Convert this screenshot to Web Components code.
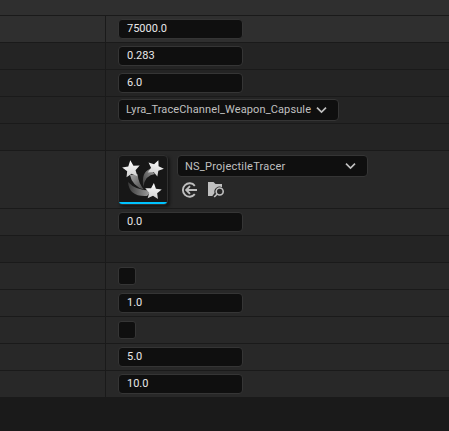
<!DOCTYPE html>
<html lang="en">
<head>
<meta charset="utf-8">
<title>Details</title>
<style>
html,body{margin:0;height:100%;background:#1a1a1a;overflow:hidden}
body{font-family:Roboto,"Liberation Sans",sans-serif;font-size:11px}
</style>
</head>
<body>
<details-panel>
  <property-row header></property-row>
  <property-row tone="hover"><number-field>75000.0</number-field></property-row>
  <property-row><number-field>0.283</number-field></property-row>
  <property-row><number-field>6.0</number-field></property-row>
  <property-row><combo-box style="width:221px;letter-spacing:.115px">Lyra_TraceChannel_Weapon_Capsule</combo-box></property-row>
  <property-row></property-row>
  <property-row tone="light" tall><asset-picker>NS_ProjectileTracer</asset-picker></property-row>
  <property-row tone="light"><number-field>0.0</number-field></property-row>
  <property-row></property-row>
  <property-row tone="light"><check-box></check-box></property-row>
  <property-row tone="light"><number-field>1.0</number-field></property-row>
  <property-row tone="light"><check-box></check-box></property-row>
  <property-row tone="light"><number-field>5.0</number-field></property-row>
  <property-row tone="light" last><number-field>10.0</number-field></property-row>
</details-panel>
<script>
const define = (name, html) => customElements.define(name, class extends HTMLElement {
  constructor() {
    super();
    this.attachShadow({ mode: 'open' }).innerHTML = html;
  }
});

define('details-panel', `<style>:host{display:flex;flex-direction:column;width:100%}</style><slot></slot>`);

define('property-row', `<style>
:host{display:grid;grid-template-columns:105px 1fr;box-sizing:border-box;height:27px;background:#242424;border-bottom:1px solid #1a1a1a}
:host([header]){display:block;height:16px;background:#2f2f2f}
:host([header]) *{display:none}
:host([tone=hover]){background:#2f2f2f}
:host([tone=light]){background:#282828}
:host([tall]){height:58px}
:host([last]){height:26px;border-bottom:0}
.value{display:flex;align-items:center;border-left:1px solid #1a1a1a;padding-left:12px}
</style><div class="name"></div><div class="value"><slot></slot></div>`);

define('number-field', `<style>
:host{display:flex;align-items:center;box-sizing:border-box;width:125px;height:20px;padding:0 8px 1px;border:1px solid #353535;border-radius:4px;background:#0f0f0f;color:#e8e8e8;line-height:13px}
</style><slot></slot>`);

define('check-box', `<style>
:host{display:block;box-sizing:border-box;width:18px;height:18px;border:1px solid #353535;border-radius:3px;background:#0f0f0f}
</style>`);

define('combo-box', `<style>
:host{display:flex;align-items:center;justify-content:space-between;box-sizing:border-box;height:22px;padding:0 11px 0 7px;border:1px solid #353535;border-radius:4px;background:#0f0f0f;color:#c0c0c0;line-height:13px;white-space:nowrap}
svg{display:block}
span{padding-bottom:var(--label-lift,1px);padding-top:var(--label-drop,0px)}
</style><span><slot></slot></span><svg width="11" height="8" viewBox="0 0 11 8"><path d="M1 1.7 5.5 6 10 1.7" fill="none" stroke="#c0c0c0" stroke-width="1.7"/></svg>`);

define('asset-thumb', `<style>
:host{display:block;box-sizing:border-box;width:50px;height:50px;border:1px solid #303030;border-radius:4px;background:#171717;box-shadow:2px 2px 3px #151515;overflow:hidden}
svg{display:block}
</style><svg width="48" height="48" viewBox="0 0 48 48">
<defs>
<linearGradient id="a" x1="0" y1="0" x2="1" y2="1"><stop offset="0" stop-color="#a8a8a8"/><stop offset="1" stop-color="#404040"/></linearGradient>
<linearGradient id="b" x1="0" y1="0" x2="1" y2="0"><stop offset="0" stop-color="#3a3a3a"/><stop offset="1" stop-color="#a8a8a8"/></linearGradient>
<linearGradient id="c" x1="1" y1="0" x2="0" y2="1"><stop offset="0" stop-color="#a0a0a0"/><stop offset="1" stop-color="#363636"/></linearGradient>
<linearGradient id="s" x1="0" y1="0" x2="0" y2="1"><stop offset="0" stop-color="#fff"/><stop offset="1" stop-color="#d0d0d0"/></linearGradient>
<path id="star" d="M0-9 2.6-3.2 8.8-2.8 4.2 1.5 5.5 7.5 0 4.5-5.5 7.5-4.2 1.5-8.8-2.8-2.6-3.2Z"/>
</defs>
<path d="M9 26Q10 41 28 40L33 34.5Q17 35 9 26Z" fill="url(#b)"/>
<path d="M11 19Q13 30 25.5 34Q19.5 28 18.5 18Z" fill="url(#a)"/>
<path d="M24.3 31Q22 16 31 13L36 18Q26 19 24.3 31Z" fill="url(#c)"/>
<use href="#star" transform="translate(12.2 13.3) rotate(-6)" fill="url(#s)"/>
<use href="#star" transform="translate(36.2 12) rotate(22) scale(.94)" fill="url(#s)"/>
<use href="#star" transform="translate(34.3 35.5) rotate(4) scale(.94)" fill="url(#s)"/>
<path d="M0 46h48v2H0z" fill="#00c3ff"/>
</svg>`);

define('asset-picker', `<style>
:host{display:grid;grid-template-columns:50px 190px;column-gap:9px;align-items:start}
asset-thumb{margin-top:1px}
.side{display:flex;flex-direction:column;gap:4px;padding-top:1px}
combo-box{letter-spacing:.23px;width:191px;--label-lift:0px;--label-drop:1px}
.tools{display:flex;gap:9px;padding-left:4px}
svg{display:block}
</style><asset-thumb></asset-thumb>
<div class="side"><combo-box><slot></slot></combo-box>
<div class="tools">
<svg width="17" height="18" viewBox="0 0 17 18"><g fill="none" stroke="#c0c0c0" stroke-width="1.9"><path d="M13.8 4.8A6.7 6.7 0 1 0 13.8 13.2M16 9H5.2M9 5.2 5.2 9 9 12.8"/></g></svg>
<svg width="18" height="18" viewBox="0 0 18 18"><path d="M1 1h5.5l2 2H15v3.2A5.2 5.2 0 0 0 7.5 12L5.3 15H1Z" fill="#c0c0c0"/><g fill="none" stroke="#c0c0c0" stroke-width="1.6"><circle cx="12.7" cy="10.5" r="3.5"/><path d="M10.2 13 7.2 16"/></g></svg>
</div></div>`);
</script>
</body>
</html>
